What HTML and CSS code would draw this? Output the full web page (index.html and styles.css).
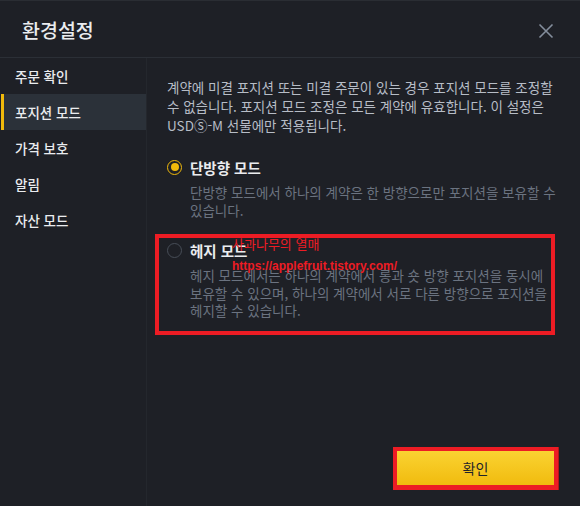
FILE: index.html
```html
<!DOCTYPE html>
<html lang="ko">
<head>
<meta charset="utf-8">
<title>환경설정</title>
<link rel="stylesheet" href="styles.css">
</head>
<body>
<div class="dialog">
  <header class="dlg-head">
    <h1 class="dlg-title">환경설정</h1>
    <button class="close" aria-label="닫기">
      <svg width="16" height="16" viewBox="0 0 16 16"><path d="M1.5 1.5 L14.5 14.5 M14.5 1.5 L1.5 14.5" stroke="#848e9c" stroke-width="1.6" fill="none"/></svg>
    </button>
  </header>
  <div class="dlg-body">
    <nav class="side">
      <div class="side-item">주문 확인</div>
      <div class="side-item active">포지션 모드</div>
      <div class="side-item">가격 보호</div>
      <div class="side-item">알림</div>
      <div class="side-item">자산 모드</div>
    </nav>
    <section class="main">
      <p class="intro">계약에 미결 포지션 또는 미결 주문이 있는 경우 포지션 모드를 조정할 수 없습니다. 포지션 모드 조정은 모든 계약에 유효합니다. 이 설정은 USDⓈ-M 선물에만 적용됩니다.</p>
      <div class="opt opt-first">
        <div class="opt-row">
          <span class="radio checked"></span>
          <span class="opt-label">단방향 모드</span>
        </div>
        <p class="opt-desc">단방향 모드에서 하나의 계약은 한 방향으로만 포지션을 보유할 수 있습니다.</p>
      </div>
      <div class="opt">
        <div class="opt-row">
          <span class="radio"></span>
          <span class="opt-label">헤지 모드</span>
        </div>
        <p class="opt-desc">헤지 모드에서는 하나의 계약에서 롱과 숏 방향 포지션을 동시에 보유할 수 있으며, 하나의 계약에서 서로 다른 방향으로 포지션을 헤지할 수 있습니다.</p>
      </div>
      <div class="footer">
        <button class="confirm">확인</button>
      </div>
    </section>
  </div>
  <div class="mark mark-hedge"></div>
  <div class="mark-text">
    <span class="mark-name">사과나무의 열매</span>
    <span class="mark-url">https://applefruit.tistory.com/</span>
  </div>
  <div class="mark mark-btn"></div>
</div>
</body>
</html>
```
FILE: styles.css
```css
* { box-sizing: border-box; }
html, body {
  margin: 0;
  padding: 0;
  background: #1e2026;
}
body {
  font-family: "Noto Sans CJK KR", "Noto Sans", sans-serif;
  color: #eaecef;
}
.dialog {
  position: relative;
  width: 580px;
  height: 506px;
  background: #1e2026;
  display: flex;
  flex-direction: column;
  border-top: 1px solid #2a2d33;
  overflow: hidden;
}
.dlg-head {
  height: 57px;
  flex: none;
  display: flex;
  align-items: center;
  justify-content: space-between;
  padding: 0 26px 0 22px;
  border-bottom: 1px solid #2b2f36;
}
.dlg-title {
  margin: 0;
  font-size: 19.5px;
  font-weight: 500;
  line-height: 24px;
  color: #eaecef;
  padding-top: 2px;
}
.close {
  background: none;
  border: 0;
  padding: 0;
  width: 16px;
  height: 16px;
  display: block;
  margin-top: 3px;
}
.close svg { display: block; }
.dlg-body {
  flex: 1;
  display: flex;
  min-height: 0;
}
.side {
  width: 147px;
  flex: none;
  border-right: 1px solid #24272d;
  padding-left: 1px;
}
.side-item {
  height: 36px;
  display: flex;
  align-items: center;
  padding-left: 14px;
  font-size: 13.5px;
  font-weight: 500;
  color: #eaecef;
  position: relative;
  width: 145px;
}
.side-item.active {
  background: #2b3139;
}
.side-item.active::before {
  content: "";
  position: absolute;
  left: 0;
  top: 0;
  bottom: 0;
  width: 3px;
  background: #f0b90b;
}
.main {
  flex: 1;
  display: flex;
  flex-direction: column;
  padding: 20px 13px 18px 20px;
  word-break: keep-all;
}
.intro {
  margin: 0;
  font-size: 13.5px;
  line-height: 19px;
  color: #b7bdc6;
}
.opt { margin-top: 20px; }
.opt-first { margin-top: 21px; }
.opt-row {
  display: flex;
  align-items: center;
  height: 22px;
  gap: 8px;
}
.radio {
  width: 15px;
  height: 15px;
  border-radius: 50%;
  border: 1.5px solid #474d57;
  flex: none;
  display: flex;
  align-items: center;
  justify-content: center;
}
.radio.checked {
  border-color: #f0b90b;
}
.radio.checked::after {
  content: "";
  width: 8px;
  height: 8px;
  border-radius: 50%;
  background: #f0b90b;
}
.opt-label {
  font-size: 14.5px;
  font-weight: 700;
  color: #eaecef;
}
.opt-desc {
  margin: 6px 0 0 23px;
  font-size: 13.5px;
  line-height: 17.5px;
  color: #6b7380;
}
.footer {
  margin-top: auto;
  display: flex;
  justify-content: flex-end;
  padding-right: 11px;
}
.confirm {
  width: 161px;
  height: 40px;
  border: 0;
  border-radius: 4px;
  background: linear-gradient(180deg, #fbd535 0%, #f0b90b 100%);
  color: #1e2329;
  font-family: "Noto Sans CJK KR", "Noto Sans", sans-serif;
  font-size: 14px;
  font-weight: 400;
}
.mark {
  position: absolute;
  border: 4px solid #ed1c24;
  pointer-events: none;
}
.mark-hedge {
  left: 155px;
  top: 233px;
  width: 400px;
  height: 101px;
}
.mark-btn {
  left: 393px;
  top: 446px;
  width: 165px;
  height: 43px;
  border-width: 4px 4px 5px 4px;
  box-shadow: 1px 0 0 #b3151b;
}
.mark-text {
  position: absolute;
  left: 232px;
  top: 234px;
  display: flex;
  flex-direction: column;
  color: #ed1c24;
  pointer-events: none;
}
.mark-name {
  font-size: 13px;
  line-height: 18px;
}
.mark-url {
  font-family: "Liberation Sans", Arial, sans-serif;
  font-size: 12px;
  font-weight: 700;
  line-height: 18px;
  margin-top: 4px;
}
```
